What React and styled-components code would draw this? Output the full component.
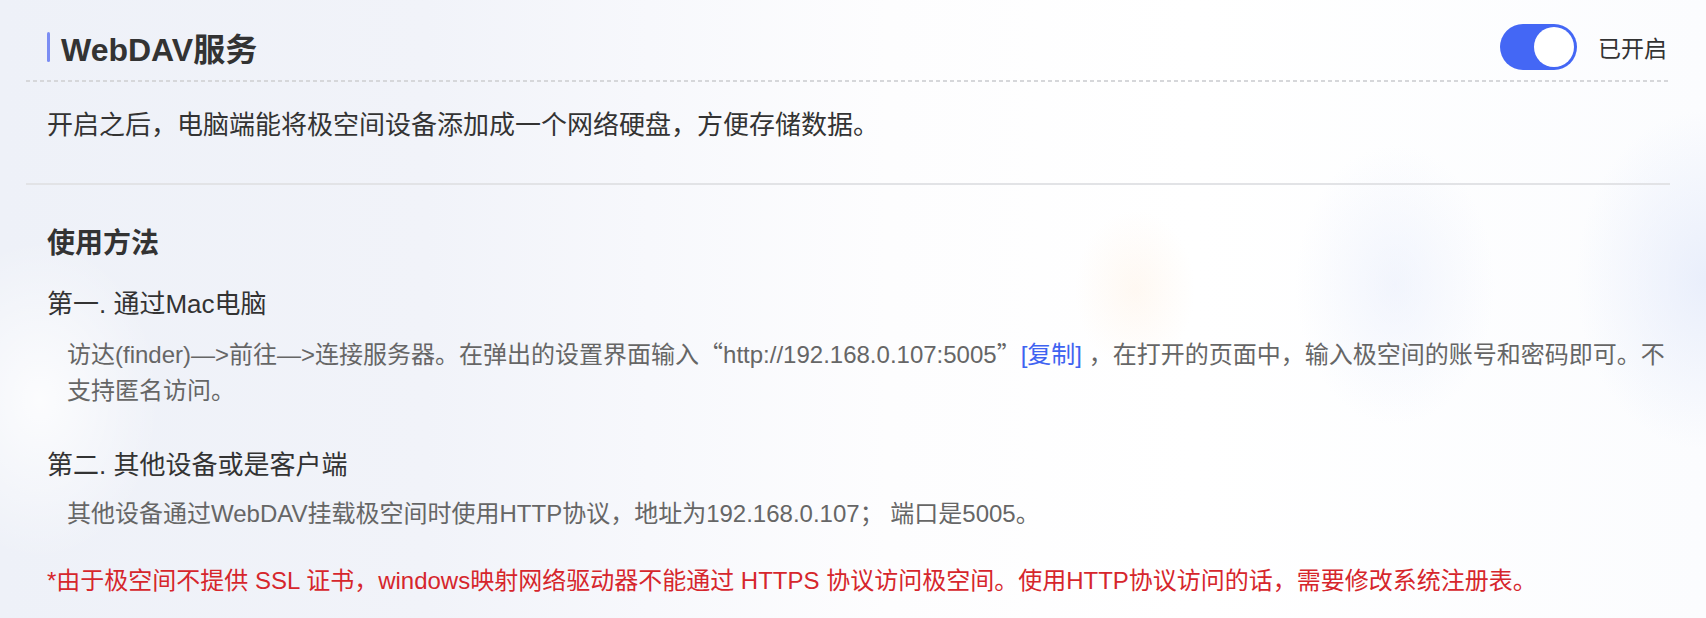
import React, { useState } from 'react';
import styled, { createGlobalStyle } from 'styled-components';

const GlobalStyle = createGlobalStyle`
  html, body {
    margin: 0;
    padding: 0;
  }
  body {
    font-family: "Liberation Sans", "Noto Sans CJK SC", sans-serif;
    color: #333;
    background:
      radial-gradient(ellipse 60px 80px at 1135px 290px, rgba(255, 230, 205, 0.25), rgba(255, 230, 205, 0) 100%),
      radial-gradient(ellipse 100px 140px at 1395px 285px, rgba(230, 236, 251, 0.5), rgba(230, 236, 251, 0) 100%),
      radial-gradient(ellipse 130px 170px at 1706px 280px, rgba(226, 233, 250, 0.7), rgba(226, 233, 250, 0) 100%),
      radial-gradient(ellipse 120px 160px at 40px 400px, rgba(255, 255, 255, 0.8), rgba(255, 255, 255, 0) 100%),
      linear-gradient(90deg, #eef1f8 0%, #f1f3f9 25%, #f7f8fc 38%, #fdfdfe 52%, #ffffff 70%, #fbfcfe 100%);
    min-height: 618px;
  }
`;

const Page = styled.div`
  padding: 0 36px 0 26px;
`;

const Header = styled.div`
  display: flex;
  align-items: center;
  justify-content: space-between;
  height: 46px;
  padding: 24px 3px 10px 21px;
`;

const Title = styled.h1`
  margin: 0;
  display: flex;
  align-items: center;
  font-size: 32px;
  font-weight: 700;
  color: #333;

  &::before {
    content: '';
    width: 3px;
    height: 30px;
    border-radius: 2px;
    background: #7b8df3;
    margin-right: 11px;
  }
`;

const SwitchWrap = styled.div`
  display: flex;
  align-items: center;
  gap: 21px;
`;

const Track = styled.button`
  position: relative;
  width: 77px;
  height: 46px;
  padding: 0;
  border: none;
  border-radius: 23px;
  background: ${(p) => (p.$on ? '#4467f5' : '#c8ccd6')};
  cursor: pointer;
`;

const Knob = styled.span`
  position: absolute;
  top: 3px;
  left: ${(p) => (p.$on ? '34px' : '3px')};
  width: 40px;
  height: 40px;
  border-radius: 50%;
  background: #fff;
`;

const SwitchLabel = styled.span`
  font-size: 23px;
  color: #333;
`;

const DashedLine = styled.div`
  height: 2px;
  background: repeating-linear-gradient(90deg, #d6d7da 0 4px, transparent 4px 7px);
`;

const SolidLine = styled.div`
  height: 2px;
  background: #e2e3e6;
`;

const Description = styled.p`
  margin: 0;
  padding: 25px 0 40px 21px;
  font-size: 26px;
  line-height: 36px;
  color: #333;
`;

const Section = styled.div`
  padding: 41px 0 0 21px;
`;

const SectionTitle = styled.h2`
  margin: 0;
  font-size: 28px;
  line-height: 36px;
  font-weight: 700;
  color: #333;
`;

const StepTitle = styled.h3`
  margin: ${(p) => p.$top}px 0 0;
  font-size: 26px;
  line-height: 36px;
  font-weight: 400;
  color: #333;
`;

const StepBody = styled.p`
  margin: 13px 0 0;
  padding-left: 20px;
  font-size: 24px;
  line-height: 36px;
  color: #666;
`;

/* full-width quotes, as the CJK font draws them */
const Quote = styled.span`
  font-family: "Noto Sans CJK SC", sans-serif;
`;

const CopyLink = styled.a`
  color: #3e63f1;
  text-decoration: none;
  cursor: pointer;
`;

const Warning = styled.p`
  margin: 31px 0 0;
  font-size: 24px;
  line-height: 36px;
  color: #d6262c;
`;

export default function App() {
  const [on, setOn] = useState(true);
  const addr = '192.168.0.107';
  const port = '5005';

  return (
    <Page>
      <GlobalStyle />
      <Header>
        <Title>WebDAV服务</Title>
        <SwitchWrap>
          <Track $on={on} onClick={() => setOn(!on)} aria-label="toggle">
            <Knob $on={on} />
          </Track>
          <SwitchLabel>{on ? '已开启' : '已关闭'}</SwitchLabel>
        </SwitchWrap>
      </Header>
      <DashedLine />
      <Description>开启之后，电脑端能将极空间设备添加成一个网络硬盘，方便存储数据。</Description>
      <SolidLine />
      <Section>
        <SectionTitle>使用方法</SectionTitle>
        <StepTitle $top={24}>第一. 通过Mac电脑</StepTitle>
        <StepBody>
          访达(finder)—&gt;前往—&gt;连接服务器。在弹出的设置界面输入<Quote>“</Quote>http://{addr}:{port}<Quote>”</Quote>
          <CopyLink>[复制]</CopyLink> ，在打开的页面中，输入极空间的账号和密码即可。不支持匿名访问。
        </StepBody>
        <StepTitle $top={38}>第二. 其他设备或是客户端</StepTitle>
        <StepBody>
          其他设备通过WebDAV挂载极空间时使用HTTP协议，地址为{addr}； 端口是{port}。
        </StepBody>
        <Warning>
          *由于极空间不提供 SSL 证书，windows映射网络驱动器不能通过 HTTPS 协议访问极空间。使用HTTP协议访问的话，需要修改系统注册表。
        </Warning>
      </Section>
    </Page>
  );
}
